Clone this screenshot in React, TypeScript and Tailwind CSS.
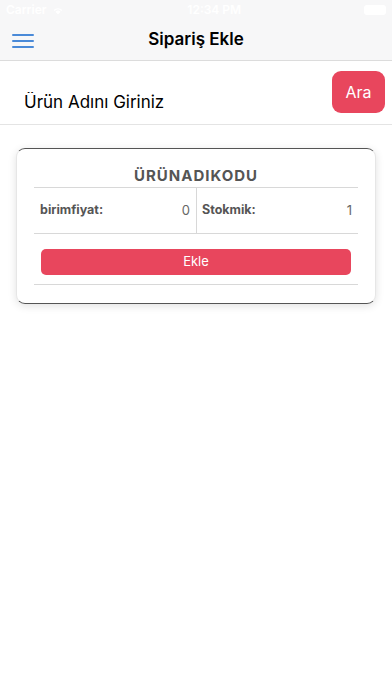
import React, { useState } from "react";

function StatusBar() {
  return (
    <div className="flex h-[20px] items-center justify-between px-[6px] text-[12px] font-semibold text-white">
      <div className="flex items-center gap-1">
        <span>Carrier</span>
        <svg width="14" height="10" viewBox="0 0 14 10" fill="white">
          <path d="M7 9.5 L4.5 6.8 A3.6 3.6 0 0 1 9.5 6.8 Z" />
          <path d="M2.6 4.9 A6.4 6.4 0 0 1 11.4 4.9 L10.4 5.9 A5 5 0 0 0 3.6 5.9 Z" />
        </svg>
      </div>
      <span>12:34 PM</span>
      <div className="h-[10px] w-[22px] rounded-[3px] bg-white" />
    </div>
  );
}

function Header() {
  return (
    <div className="relative flex h-[41px] items-center justify-center border-b border-[#dcdcdc]">
      <button type="button" className="absolute left-[12px] top-[14px] flex flex-col gap-[4px]">
        <span className="block h-[2px] w-[22px] rounded bg-[#4a8ad8]" />
        <span className="block h-[2px] w-[22px] rounded bg-[#4a8ad8]" />
        <span className="block h-[2px] w-[22px] rounded bg-[#4a8ad8]" />
      </button>
      <h1 className="text-[17px] font-semibold text-black">Sipariş Ekle</h1>
    </div>
  );
}

export default function App() {
  const [query, setQuery] = useState("");

  return (
    <div
      className="min-h-[696px] w-[392px] bg-white"
      style={{ fontFamily: "Inter, 'Noto Sans', sans-serif" }}
    >
      <div className="bg-[#f7f7f8]">
        <StatusBar />
        <Header />
      </div>

      {/* search row */}
      <div className="flex h-[64px] items-start border-b border-[#e4e4e4] bg-white">
        <input
          value={query}
          onChange={(e) => setQuery(e.target.value)}
          placeholder="Ürün Adını Giriniz"
          className="mt-[29px] ml-[24px] flex-1 bg-transparent text-[17px] text-black outline-none placeholder:text-black"
        />
        <button
          type="button"
          className="mt-[10px] mr-[7px] h-[42px] w-[53px] rounded-[9px] bg-[#e8465d] text-[16px] text-white"
        >
          Ara
        </button>
      </div>

      {/* product card */}
      <div className="px-[16px] pt-[23px]">
        <div className="rounded-[9px] border border-x-[#e6e6e6] border-t-[#555] border-b-[#555] bg-white px-[17px] pb-[18px] pt-[18px] shadow-[0_2px_8px_rgba(0,0,0,0.12)]">
          <div className="border-b border-[#d8d8d8] pb-[2px] text-center text-[15px] font-bold leading-[18px] tracking-[1px] text-[#555]">
            ÜRÜNADIKODU
          </div>
          <div className="flex h-[46px] items-center border-b border-[#d8d8d8] text-[12.5px] text-[#555]">
            <div className="flex h-full flex-1 items-center justify-between border-r border-[#d8d8d8] pl-[6px] pr-[6px]">
              <span className="font-bold">birimfiyat:</span>
              <span className="text-[13px] text-[#666]">0</span>
            </div>
            <div className="flex flex-1 items-center justify-between pl-[5px] pr-[6px]">
              <span className="font-bold">Stokmik:</span>
              <span className="text-[13px] text-[#666]">1</span>
            </div>
          </div>
          <div className="border-b border-[#d8d8d8] px-[7px] pb-[9px] pt-[14px]">
            <button
              type="button"
              className="h-[26px] w-full rounded-[5px] bg-[#e8465d] text-[13px] text-white"
            >
              Ekle
            </button>
          </div>
        </div>
      </div>
    </div>
  );
}
